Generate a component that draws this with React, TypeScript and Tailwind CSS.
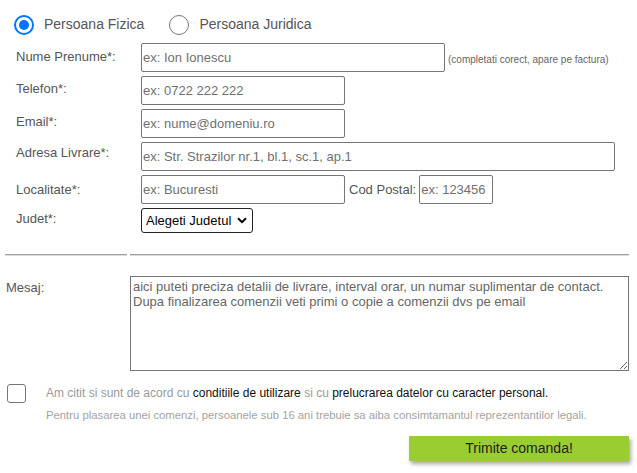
import { useState } from 'react'
import { clsx } from 'clsx'

const inputCls =
  'h-[29px] border border-[#767676] rounded-[2px] px-[1px] text-[13px] text-[#222] bg-white outline-none placeholder:text-[#707070]'

function Radio({ checked, label, onClick }: { checked: boolean; label: string; onClick: () => void }) {
  return (
    <button type="button" onClick={onClick} className="flex items-center cursor-pointer">
      <span
        className={clsx(
          'w-[20px] h-[20px] rounded-full flex items-center justify-center bg-white',
          checked ? 'border-2 border-[#0075ff]' : 'border-[1.5px] border-[#767676]',
        )}
      >
        {checked && <span className="w-[10px] h-[10px] rounded-full bg-[#0075ff]" />}
      </span>
      <span className="ml-[10px] text-[14px] text-[#555]">{label}</span>
    </button>
  )
}

// label column + field, one row of the order form
function Row({ label, pt, children }: { label: string; pt: string; children: React.ReactNode }) {
  return (
    <div className="flex items-start mb-[4px]">
      <div className={clsx('w-[141px] pl-[16px] text-[13px] leading-[15px] text-[#555]', pt)}>{label}</div>
      {children}
    </div>
  )
}

export default function App() {
  const [tip, setTip] = useState<'fizica' | 'juridica'>('fizica')
  const [acord, setAcord] = useState(false)

  return (
    <div className="w-[637px] h-[473px] bg-white font-['Liberation_Sans',Arial,sans-serif] overflow-hidden">
      {/* Tip persoana */}
      <div className="flex items-center pl-[14px] pt-[14px]">
        <Radio checked={tip === 'fizica'} label="Persoana Fizica" onClick={() => setTip('fizica')} />
        <div className="ml-[25px]">
          <Radio checked={tip === 'juridica'} label="Persoana Juridica" onClick={() => setTip('juridica')} />
        </div>
      </div>

      <div className="mt-[8px]">
        <Row label="Nume Prenume*:" pt="pt-[6px]">
          <input className={clsx(inputCls, 'w-[304px]')} placeholder="ex: Ion Ionescu" />
          <span className="ml-[3px] mt-[9px] text-[10px] text-[#666]">(completati corect, apare pe factura)</span>
        </Row>
        <Row label="Telefon*:" pt="pt-[5px]">
          <input className={clsx(inputCls, 'w-[204px]')} placeholder="ex: 0722 222 222" />
        </Row>
        <Row label="Email*:" pt="pt-[5px]">
          <input className={clsx(inputCls, 'w-[204px]')} placeholder="ex: nume@domeniu.ro" />
        </Row>
        <Row label="Adresa Livrare*:" pt="pt-[3px]">
          <input className={clsx(inputCls, 'w-[474px]')} placeholder="ex: Str. Strazilor nr.1, bl.1, sc.1, ap.1" />
        </Row>
        <Row label="Localitate*:" pt="pt-[7px]">
          <input className={clsx(inputCls, 'w-[204px]')} placeholder="ex: Bucuresti" />
          <span className="ml-[4px] mr-[3px] pt-[7px] text-[13px] leading-[15px] text-[#555]">Cod Postal:</span>
          <input className={clsx(inputCls, 'w-[74px]')} placeholder="ex: 123456" />
        </Row>
        <Row label="Judet*:" pt="pt-[3px]">
          <div className="relative">
            <select className="appearance-none h-[25px] w-[112px] border border-[#222] rounded-[3px] pl-[4px] text-[13px] text-black bg-white outline-none">
              <option>Alegeti Judetul</option>
              <option>Bucuresti</option>
              <option>Cluj</option>
            </select>
            <svg
              className="absolute right-[6px] top-[9px] pointer-events-none"
              width="10"
              height="7"
              viewBox="0 0 10 7"
              fill="none"
            >
              <path d="M1 1.2 5 5.2 9 1.2" stroke="#000" strokeWidth="2" />
            </svg>
          </div>
        </Row>
      </div>

      {/* Separator */}
      <div className="flex mt-[21px] pl-[5px] gap-[3px]">
        <div className="w-[122px] h-[2px] border-t border-[#a0a0a0] border-b border-b-[#dcdcdc]" />
        <div className="w-[499px] h-[2px] border-t border-[#a0a0a0] border-b border-b-[#dcdcdc]" />
      </div>

      {/* Mesaj */}
      <div className="flex mt-[20px] pl-[6px]">
        <div className="w-[124px] pt-[4px] text-[13px] leading-[15px] text-[#555]">Mesaj:</div>
        <textarea
          className="w-[499px] h-[95px] border border-[#767676] px-[2px] py-[2px] text-[13px] leading-[15px] text-[#222] bg-white outline-none placeholder:text-[#666]"
          placeholder={
            'aici puteti preciza detalii de livrare, interval orar, un numar suplimentar de contact.\nDupa finalizarea comenzii veti primi o copie a comenzii dvs pe email'
          }
        />
      </div>

      {/* Acord */}
      <div className="flex mt-[13px] pl-[7px]">
        <button
          type="button"
          onClick={() => setAcord(!acord)}
          className={clsx(
            'w-[19px] h-[19px] rounded-[3px] border-[1.5px] flex-shrink-0',
            acord ? 'bg-[#0075ff] border-[#0075ff]' : 'bg-white border-[#767676]',
          )}
        />
        <div className="ml-[20px]">
          <div className="mt-[2px] text-[12px] leading-[14px] text-[#999]">
            Am citit si sunt de acord cu <span className="text-[#111]">conditiile de utilizare</span> si cu{' '}
            <span className="text-[#111]">prelucrarea datelor cu caracter personal.</span>
          </div>
          <div className="mt-[9px] text-[11.3px] leading-[13px] text-[#a3a3a3]">
            Pentru plasarea unei comenzi, persoanele sub 16 ani trebuie sa aiba consimtamantul reprezentantilor legali.
          </div>
        </div>
      </div>

      <div className="flex justify-end pr-[8px] mt-[14px]">
        <button
          type="button"
          className="w-[220px] h-[25px] bg-[#9acd32] text-[14px] text-[#222] shadow-[2px_3px_4px_rgba(0,0,0,0.35)]"
        >
          Trimite comanda!
        </button>
      </div>
    </div>
  )
}
